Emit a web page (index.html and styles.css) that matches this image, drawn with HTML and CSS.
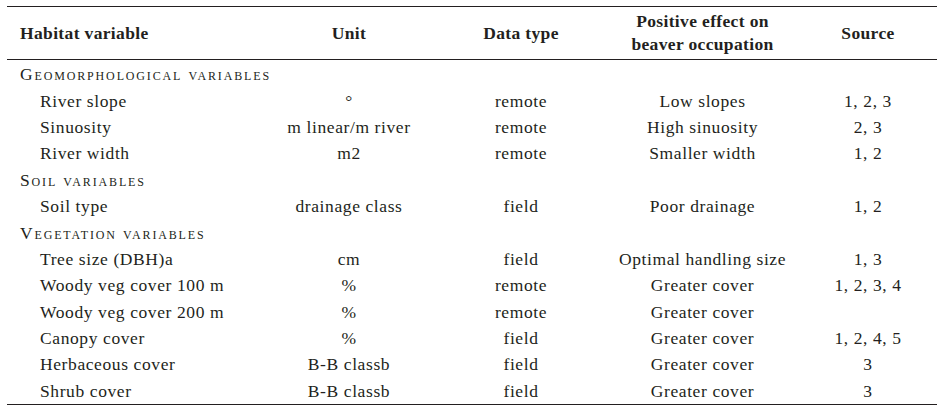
FILE: index.html
```html
<!DOCTYPE html>
<html lang="en">
<head>
<meta charset="utf-8">
<title>Habitat variables</title>
<link rel="stylesheet" href="styles.css">
</head>
<body>
<table class="habitat">
  <colgroup>
    <col class="c1"><col class="c2"><col class="c3"><col class="c4"><col class="c5">
  </colgroup>
  <thead>
    <tr>
      <th class="left">Habitat variable</th>
      <th>Unit</th>
      <th>Data type</th>
      <th>Positive effect on<br>beaver occupation</th>
      <th>Source</th>
    </tr>
  </thead>
  <tbody>
    <tr class="group first"><td colspan="5">Geomorphological variables</td></tr>
    <tr><td class="var">River slope</td><td>°</td><td>remote</td><td>Low slopes</td><td>1, 2, 3</td></tr>
    <tr><td class="var">Sinuosity</td><td>m linear/m river</td><td>remote</td><td>High sinuosity</td><td>2, 3</td></tr>
    <tr><td class="var">River width</td><td>m2</td><td>remote</td><td>Smaller width</td><td>1, 2</td></tr>
    <tr class="group"><td colspan="5">Soil variables</td></tr>
    <tr><td class="var">Soil type</td><td>drainage class</td><td>field</td><td>Poor drainage</td><td>1, 2</td></tr>
    <tr class="group"><td colspan="5">Vegetation variables</td></tr>
    <tr><td class="var">Tree size (DBH)a</td><td>cm</td><td>field</td><td>Optimal handling size</td><td>1, 3</td></tr>
    <tr><td class="var">Woody veg cover 100 m</td><td>%</td><td>remote</td><td>Greater cover</td><td>1, 2, 3, 4</td></tr>
    <tr><td class="var">Woody veg cover 200 m</td><td>%</td><td>remote</td><td>Greater cover</td><td></td></tr>
    <tr><td class="var">Canopy cover</td><td>%</td><td>field</td><td>Greater cover</td><td>1, 2, 4, 5</td></tr>
    <tr><td class="var">Herbaceous cover</td><td>B-B classb</td><td>field</td><td>Greater cover</td><td>3</td></tr>
    <tr><td class="var">Shrub cover</td><td>B-B classb</td><td>field</td><td>Greater cover</td><td>3</td></tr>
  </tbody>
</table>
</body>
</html>
```
FILE: styles.css
```css
html, body {
  margin: 0;
  padding: 0;
  background: #ffffff;
}

body {
  font-family: "Liberation Serif", "DejaVu Serif", serif;
  color: #231f20;
  font-size: 17.5px;
}

.habitat {
  margin: 6px 0 0 7px;
  width: 930px;
  border-collapse: collapse;
  table-layout: fixed;
  border-top: 1px solid #231f20;
  border-bottom: 1px solid #231f20;
}

.c1 { width: 255px; }
.c2 { width: 174px; }
.c3 { width: 170px; }
.c4 { width: 193px; }
.c5 { width: 138px; }

.habitat th {
  font-weight: bold;
  text-align: center;
  line-height: 23px;
  height: 52px;
  padding: 0;
  vertical-align: middle;
  letter-spacing: 0.35px;
  border-bottom: 1px solid #231f20;
}

.habitat th.left {
  text-align: left;
  padding-left: 13px;
}

.habitat td {
  text-align: center;
  height: 26.4px;
  padding: 0;
  line-height: 20px;
  vertical-align: middle;
  white-space: nowrap;
  letter-spacing: 0.6px;
}

.habitat td.var {
  text-align: left;
  padding-left: 33px;
}

.habitat tr.group td {
  text-align: left;
  padding-left: 13px;
  font-variant: small-caps;
  letter-spacing: 1.85px;
}

.habitat tr.first td {
  padding-top: 1px;
}
```
